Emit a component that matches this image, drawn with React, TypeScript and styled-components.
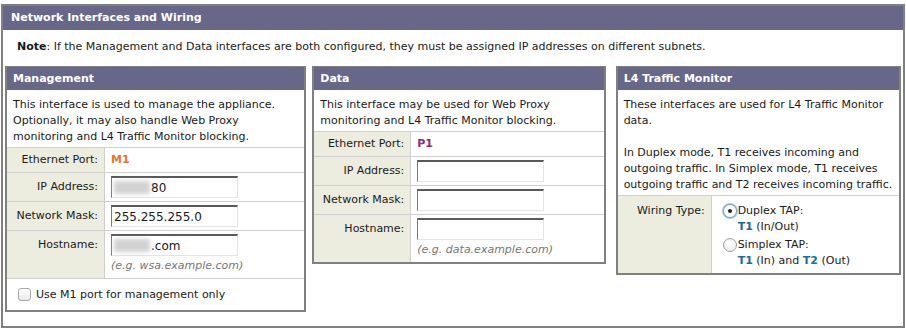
import styled, { createGlobalStyle, css } from "styled-components";

const GlobalStyle = createGlobalStyle`
  body {
    margin: 0;
    background: #fff;
    font-family: "DejaVu Sans", Verdana, sans-serif;
    font-size: 11px;
    color: #1a1a1a;
  }
`;

const colors = {
  header: "#67678a",
  border: "#808080",
  label: "#ececdf",
  rule: "#cfcfcf",
  port: "#e8742a",
  dataPort: "#8b2c7c",
  tap: "#1b6e9c",
  hint: "#777",
};

const Panel = styled.div`
  margin: 4px 1px 0;
  height: 320px;
  border: 2px solid ${colors.border};
  display: flex;
  flex-direction: column;
`;

const PanelTitle = styled.div`
  height: 24px;
  line-height: 24px;
  padding-left: 8px;
  background: ${colors.header};
  color: #fff;
  font-weight: bold;
`;

const Note = styled.div`
  padding: 9px 14px 0;
  height: 27px;
  line-height: 16px;

  strong {
    font-weight: bold;
  }
`;

const Columns = styled.div`
  display: flex;
  align-items: flex-start;
  padding: 0 2px;
  gap: 6px;
`;

const Box = styled.div<{ $width: number; $gapBefore?: number }>`
  width: ${({ $width }) => $width}px;
  margin-left: ${({ $gapBefore = 0 }) => $gapBefore}px;
  border: 2px solid ${colors.border};
  border-top-width: 1px;
  box-sizing: border-box;
`;

const BoxTitle = styled.div`
  height: 23px;
  line-height: 23px;
  padding-left: 6px;
  background: ${colors.header};
  color: #fff;
  font-weight: bold;
`;

const Description = styled.div`
  padding: 7px 6px 2px;
  line-height: 16px;
  white-space: nowrap;
`;

const Row = styled.div<{ $labelWidth: number }>`
  display: grid;
  grid-template-columns: ${({ $labelWidth }) => $labelWidth}px 1fr;
  border-top: 1px solid ${colors.rule};
`;

const Label = styled.div<{ $tall?: boolean }>`
  background: ${colors.label};
  border-right: 1px solid ${colors.rule};
  text-align: right;
  padding: 4px 6px;
  line-height: 16px;
  white-space: nowrap;

  ${({ $tall }) =>
    $tall &&
    css`
      padding-top: 3px;
      padding-bottom: 3px;
      line-height: 22px;
    `}
`;

const Value = styled.div<{ $tall?: boolean }>`
  padding: ${({ $tall }) => ($tall ? "3px 6px" : "4px 6px")};
  line-height: 16px;
`;

const Port = styled.span<{ $color: string }>`
  color: ${({ $color }) => $color};
  font-weight: bold;
`;

const Field = styled.div`
  width: 123px;
  height: 19px;
  box-sizing: content-box;
  border-style: solid;
  border-width: 2px 1px 1px 1px;
  border-color: #5a5a5a #e4e4e4 #e4e4e4 #7a7a7a;
  background: #fff;
  display: flex;
  align-items: center;
  padding-left: 2px;
  font-size: 12px;
  white-space: nowrap;
`;

const Smudge = styled.span<{ $width: number }>`
  display: inline-block;
  width: ${({ $width }) => $width}px;
  height: 13px;
  background: #d2d2d2;
  filter: blur(2px);
  margin-right: 1px;
`;

const Hint = styled.div`
  color: ${colors.hint};
  font-style: italic;
  line-height: 19px;
`;

const CheckRow = styled.label`
  display: flex;
  align-items: center;
  gap: 5px;
  height: 31px;
  padding-left: 11px;
  border-top: 1px solid ${colors.rule};
`;

const CheckBox = styled.span`
  width: 11px;
  height: 11px;
  border: 1px solid #a6a6a6;
  border-radius: 3px;
  background: linear-gradient(#fff, #e9e9e9);
`;

const RadioList = styled.div`
  padding: 3px 0 0 5px;
  display: flex;
  flex-direction: column;
  gap: 2px;
`;

const RadioOption = styled.div`
  display: grid;
  grid-template-columns: 15px 1fr;
  line-height: 16px;
`;

const Radio = styled.span<{ $checked?: boolean }>`
  width: 12px;
  height: 12px;
  margin-top: 1px;
  border-radius: 50%;
  border: 1px solid #a0a0a0;
  background: radial-gradient(circle at 50% 35%, #fff, #e6e6e6);
  display: flex;
  align-items: center;
  justify-content: center;

  ${({ $checked }) =>
    $checked &&
    css`
      border-color: #6d9fd6;
      box-shadow: 0 0 0 1px #a9c8ec;
      background: #fff;

      &::after {
        content: "";
        width: 4px;
        height: 4px;
        border-radius: 50%;
        background: #222;
      }
    `}
`;

const Tap = styled.b`
  color: ${colors.tap};
`;

function FieldRow({
  label,
  labelWidth,
  children,
  hint,
}: {
  label: string;
  labelWidth: number;
  children?: React.ReactNode;
  hint?: string;
}) {
  return (
    <Row $labelWidth={labelWidth}>
      <Label $tall>{label}</Label>
      <Value $tall>
        <Field>{children}</Field>
        {hint && <Hint>{hint}</Hint>}
      </Value>
    </Row>
  );
}

export default function App() {
  return (
    <>
      <GlobalStyle />
      <Panel>
        <PanelTitle>Network Interfaces and Wiring</PanelTitle>
        <Note>
          <strong>Note</strong>: If the Management and Data interfaces are both
          configured, they must be assigned IP addresses on different subnets.
        </Note>

        <Columns>
          <Box $width={302}>
            <BoxTitle>Management</BoxTitle>
            <Description>
              This interface is used to manage the appliance.
              <br />
              Optionally, it may also handle Web Proxy
              <br />
              monitoring and L4 Traffic Monitor blocking.
            </Description>
            <Row $labelWidth={98}>
              <Label>Ethernet Port:</Label>
              <Value>
                <Port $color={colors.port}>M1</Port>
              </Value>
            </Row>
            <FieldRow label="IP Address:" labelWidth={98}>
              <Smudge $width={36} />
              80
            </FieldRow>
            <FieldRow label="Network Mask:" labelWidth={98}>
              255.255.255.0
            </FieldRow>
            <FieldRow
              label="Hostname:"
              labelWidth={98}
              hint="(e.g. wsa.example.com)"
            >
              <Smudge $width={36} />
              .com
            </FieldRow>
            <CheckRow>
              <CheckBox />
              Use M1 port for management only
            </CheckRow>
          </Box>

          <Box $width={294}>
            <BoxTitle>Data</BoxTitle>
            <Description>
              This interface may be used for Web Proxy
              <br />
              monitoring and L4 Traffic Monitor blocking.
            </Description>
            <Row $labelWidth={97}>
              <Label>Ethernet Port:</Label>
              <Value>
                <Port $color={colors.dataPort}>P1</Port>
              </Value>
            </Row>
            <FieldRow label="IP Address:" labelWidth={97} />
            <FieldRow label="Network Mask:" labelWidth={97} />
            <FieldRow
              label="Hostname:"
              labelWidth={97}
              hint="(e.g. data.example.com)"
            />
          </Box>

          <Box $width={286} $gapBefore={4}>
            <BoxTitle>L4 Traffic Monitor</BoxTitle>
            <Description>
              These interfaces are used for L4 Traffic Monitor
              <br />
              data.
              <br />
              <br />
              In Duplex mode, T1 receives incoming and
              <br />
              outgoing traffic. In Simplex mode, T1 receives
              <br />
              outgoing traffic and T2 receives incoming traffic.
            </Description>
            <Row $labelWidth={94}>
              <Label style={{ paddingTop: 7 }}>Wiring Type:</Label>
              <Value>
                <RadioList>
                  <RadioOption>
                    <Radio $checked />
                    <span>
                      Duplex TAP:
                      <br />
                      <Tap>T1</Tap> (In/Out)
                    </span>
                  </RadioOption>
                  <RadioOption>
                    <Radio />
                    <span>
                      Simplex TAP:
                      <br />
                      <Tap>T1</Tap> (In) and <Tap>T2</Tap> (Out)
                    </span>
                  </RadioOption>
                </RadioList>
              </Value>
            </Row>
          </Box>
        </Columns>
      </Panel>
    </>
  );
}
